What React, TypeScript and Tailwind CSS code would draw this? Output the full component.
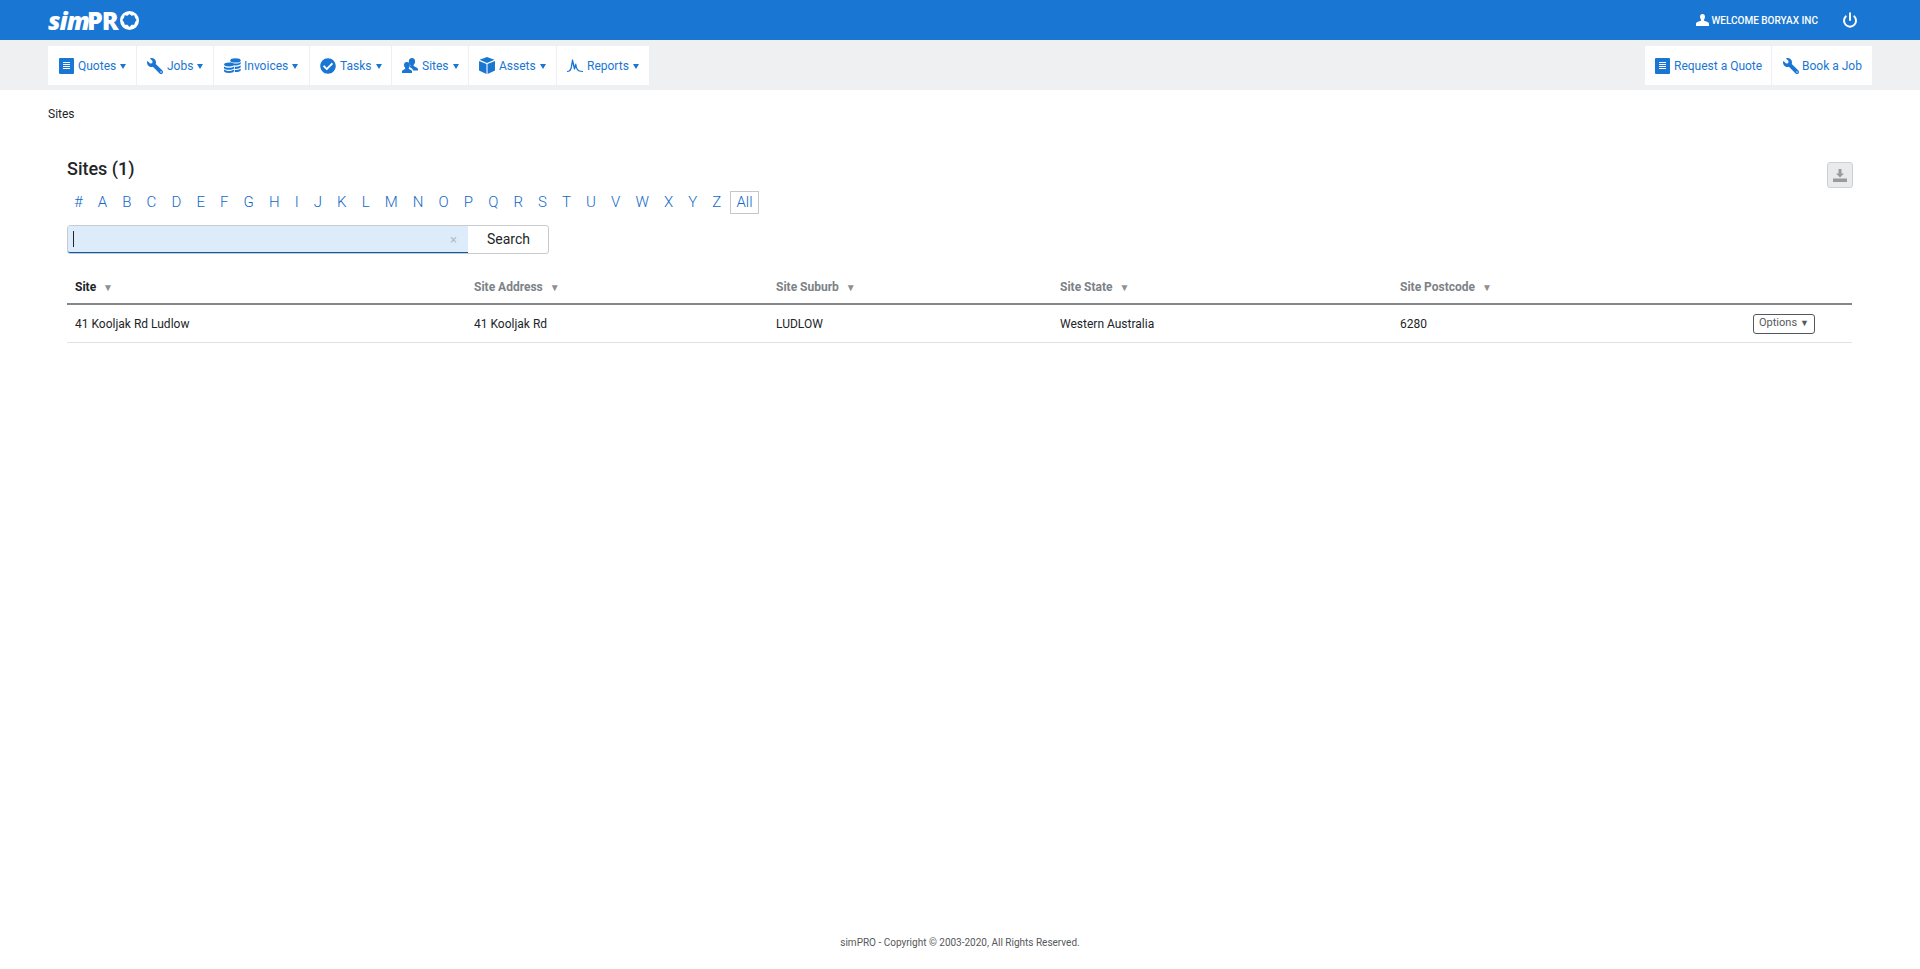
import React from "react";
import { FaWrench, FaCheckCircle } from "react-icons/fa";
import { Power } from "lucide-react";

const blue = "text-[#1976d2]";

function DocIcon() {
    return (
        <svg viewBox="0 0 15 16" className="w-[15px] h-[16px] shrink-0">
            <rect x="0" y="0" width="15" height="16" rx="1" fill="#1976d2" />
            <path d="M4 4.500h7M4 6.500h7M4 8.500h7M4 10.500h7" stroke="#fff" strokeWidth="1" />
        </svg>
    );
}

function CoinsIcon() {
    return (
        <svg viewBox="0 0 17 15" className="w-[17px] h-[15px] shrink-0" fill="#1976d2">
            <ellipse cx="11.500" cy="2.400" rx="5.200" ry="2.200" />
            <path d="M6.300 4v1.600c0 1 2.300 1.900 5.200 1.900s5.200-.9 5.200-1.900V4c-1 1-3 1.500-5.200 1.500S7.300 5 6.300 4z" />
            <path d="M0 6.500c0-1.100 2.200-2 5-2s5 .9 5 2-2.200 2-5 2-5-.9-5-2z" />
            <path d="M0 8.500V10c0 1 2.200 1.800 5 1.800s5-.8 5-1.800V8.500c-1 .9-2.900 1.300-5 1.300s-4-.4-5-1.300z" />
            <path d="M0 11.500V13c0 1 2.200 2 5 2s5-1 5-2v-1.500c-1 .9-2.900 1.500-5 1.500s-4-.6-5-1.500z" />
            <path d="M10.800 8.800c2.500 0 4.800-.4 5.900-1.300v1.600c0 1-2.300 1.900-5.200 1.900h-.7z" />
            <path d="M10.800 12c2.500 0 4.800-.4 5.900-1.300v1.500c0 1-2.300 1.800-5.200 1.800h-.7z" />
        </svg>
    );
}

function UsersIcon() {
    return (
        <svg viewBox="0 0 16 15" className="w-[16px] h-[15px] shrink-0" fill="#1976d2">
            <path d="M10 0C8 0 6.800 1.400 6.800 3.400c0 1.400.5 2.800 1.400 3.700.3.400.3 1.100-.2 1.400l-.8.500c1.700.7 3.500 1.600 4 3.500H16v-1.500c0-1.200-3.300-2.200-4.200-3-.4-.4-.3-1 0-1.300.8-.9 1.300-2.100 1.300-3.200C13.100 1.400 12 0 10 0z" />
            <path d="M4.800 4C3.100 4 2 5.200 2 6.900c0 1.100.4 2.100 1.100 2.900.3.300.3.900-.1 1.200-1 .7-3 1.300-3 2.300V15h10v-1.700c0-1-2-1.600-3-2.300-.4-.3-.4-.9-.1-1.200.7-.8 1-1.800 1-2.900C7.900 5.200 6.500 4 4.800 4z" />
        </svg>
    );
}

function CubeIcon() {
    return (
        <svg viewBox="0 0 15 16" className="w-[16px] h-[17px] shrink-0" fill="#1976d2">
            <path d="M7.500 0L14.500 2.700 7.500 5.600 .5 2.700z" />
            <path d="M0 3.700l7 2.900V16L0 12.600z" />
            <path d="M15 3.700L8 6.600V16l7-3.400z" />
        </svg>
    );
}

function PulseIcon() {
    return (
        <svg viewBox="0 0 16 13" className="w-[16px] h-[13px] shrink-0" fill="#1976d2">
            <path d="M0 12c2.500-.2 3-1.500 3.700-4L5 .5h1l1.600 6.500.9-2.500h.7L10 8.300c.8 2.800 2.700 3.700 6 3.700v1c-3.800 0-6-1-7-4l-.2-.8-.8 2.300H7L5.500 5 4.800 9C4 12 2.600 13 0 13z" />
        </svg>
    );
}

function Caret() {
    return (
        <svg viewBox="0 0 6 5" className="w-[6px] h-[5px] shrink-0 mt-[2px]" fill="#1976d2">
            <path d="M0 0h6L3 5z" />
        </svg>
    );
}

const wrench = <FaWrench className="w-[16px] h-[16px] shrink-0 -scale-x-100" />;

const navItems: { label: string; icon: React.ReactNode; width: string }[] = [
    { label: "Quotes", icon: <DocIcon />, width: "w-[89px]" },
    { label: "Jobs", icon: wrench, width: "w-[77px]" },
    { label: "Invoices", icon: <CoinsIcon />, width: "w-[96px]" },
    { label: "Tasks", icon: <FaCheckCircle className="w-[16px] h-[16px] shrink-0" />, width: "w-[82px]" },
    { label: "Sites", icon: <UsersIcon />, width: "w-[77px]" },
    { label: "Assets", icon: <CubeIcon />, width: "w-[88px]" },
    { label: "Reports", icon: <PulseIcon />, width: "w-[92px]" },
];

const letters = "# A B C D E F G H I J K L M N O P Q R S T U V W X Y Z".split(" ");

const columns = [
    { label: "Site", width: "w-[399px]", dark: true },
    { label: "Site Address", width: "w-[302px]", dark: false },
    { label: "Site Suburb", width: "w-[284px]", dark: false },
    { label: "Site State", width: "w-[340px]", dark: false },
    { label: "Site Postcode", width: "w-[345px]", dark: false },
];

const row = ["41 Kooljak Rd Ludlow", "41 Kooljak Rd", "LUDLOW", "Western Australia", "6280"];

export default function App() {
    return (
        <div className="min-h-[969px] flex flex-col bg-white font-['Roboto',sans-serif] text-[#212529]">
            {/* Top bar */}
            <header className="h-[40px] bg-[#1976d2] pl-[48px] pr-[62px] flex items-center justify-between text-white">
                <div className="flex items-center font-['Open_Sans',sans-serif] font-extrabold text-[25px] leading-none">
                    <span className="italic w-[39px] tracking-[-1px]">sim</span>
                    <span className="w-[33px] tracking-[-1px]">PR</span>
                    <svg viewBox="0 0 20 20" className="w-[19px] h-[19px]" fill="#fff">
                        <path
                            fillRule="evenodd"
                            d="M10 0a10 10 0 1 0 0 20a10 10 0 0 0 0-20zM10 3.200l2.200 1.900 2.800-.7.800 2.800 1.700 2.300-1.700 2.300-.8 2.800-2.800-.2L10 16.800l-2.200-2.400-2.800.2-.8-2.800L2.500 9.500l1.700-2.300L5 4.400l2.800.7z"
                        />
                    </svg>
                </div>
                <div className="flex items-center">
                    <svg viewBox="0 0 13 12" className="w-[13px] h-[12px]" fill="#fff">
                        <path d="M6.500 0C4.800 0 4 1.200 4 2.800c0 1.100.4 2.200 1 2.900.3.400.2.900-.2 1.100C3.500 7.500 0 8 0 9.800V12h13V9.800c0-1.800-3.500-2.300-4.800-3-.4-.2-.5-.7-.2-1.100.6-.7 1-1.800 1-2.900C9 1.200 8.200 0 6.500 0z" />
                    </svg>
                    <span className="ml-[2px] text-[10px] font-medium">WELCOME BORYAX INC</span>
                    <Power className="w-[16px] h-[16px] ml-[24px]" strokeWidth={3} />
                </div>
            </header>

            {/* Nav bar */}
            <nav className="h-[50px] bg-[#eff0f2] pl-[48px] pr-[48px] pt-[6px] flex justify-between">
                <div className="flex h-[39px] bg-white">
                    {navItems.map((item) => (
                        <a
                            key={item.label}
                            className={`${item.width} ${blue} flex items-center pl-[10px] gap-[4px] border-r border-[#eff0f2] last:border-r-0 text-[12px]`}
                        >
                            <span className="w-[16px] flex justify-center shrink-0">{item.icon}</span>
                            <span>{item.label}</span>
                            <Caret />
                        </a>
                    ))}
                </div>
                <div className="flex h-[39px] bg-white">
                    <a className={`w-[127px] ${blue} flex items-center pl-[10px] gap-[4px] border-r border-[#eff0f2] text-[12px]`}>
                        <DocIcon />
                        Request a Quote
                    </a>
                    <a className={`w-[100px] ${blue} flex items-center pl-[11px] gap-[3px] text-[12px]`}>
                        {wrench}
                        Book a Job
                    </a>
                </div>
            </nav>

            <div className="pl-[48px] pt-[17px] text-[12px] leading-[14px] text-[#212529]">Sites</div>

            <main className="flex-1 pl-[67px] pr-[67px] pt-[36px]">
                <div className="flex justify-between">
                    <div>
                        <h1 className="text-[18px] leading-[24px] font-medium">Sites (1)</h1>
                        <div className="flex items-center mt-[10px] pl-[7px] h-[23px] text-[15px] font-light text-[#1169c8]">
                            {letters.map((l) => (
                                <a key={l} className="mr-[15.100px]">
                                    {l}
                                </a>
                            ))}
                            <a className="border border-[#c4c7ca] px-[5px] h-[23px] leading-[21px] -ml-[6px]">All</a>
                        </div>
                        <div className="flex w-[482px] h-[29px] mt-[11px] border border-[#c9cbce] rounded-[3px]">
                            <div className="flex-1 bg-[#dcecfb] border-b border-b-[#0d5aa7] rounded-l-[2px] flex items-center justify-between pl-[5px] pr-[11px]">
                                <span className="w-px h-[16px] bg-[#212529]" />
                                <span className="text-[13px] leading-none text-[#b5bcc4]">×</span>
                            </div>
                            <button className="w-[80px] pl-[1px] text-[14px] text-[#212529]">Search</button>
                        </div>
                    </div>
                    <button className="mt-[5px] w-[26px] h-[26px] bg-[#e9eaec] border border-[#cfd0d2] rounded-[3px] flex items-center justify-center">
                        <svg viewBox="0 0 14 13" className="w-[14px] h-[13px]" fill="#9a9a9a">
                            <path d="M5.500 0h3v4.500H11L7 8.500 3 4.500h2.500z" />
                            <rect x="0" y="9.500" width="14" height="3.500" />
                        </svg>
                    </button>
                </div>

                {/* Table */}
                <div className="mt-[17px] w-[1785px]">
                    <div className="flex h-[34px] pl-[8px] items-center text-[12px] font-bold border-b-2 border-[#84888b]">
                        {columns.map((c) => (
                            <div key={c.label} className={`${c.width} flex items-center ${c.dark ? "text-[#212529]" : "text-[#7c8287]"}`}>
                                {c.label}
                                <span className="ml-[7px] text-[10px] font-normal text-[#8c9094]">▼</span>
                            </div>
                        ))}
                    </div>
                    <div className="flex h-[38px] pl-[8px] items-center text-[12px] border-b border-[#e1e2e3]">
                        {row.map((cell, i) => (
                            <div key={cell} className={columns[i].width}>
                                {cell}
                            </div>
                        ))}
                        <button className="ml-[8px] w-[62px] h-[20px] border border-[#55595c] rounded-[3px] text-[11px] text-[#55595c] flex items-center justify-center gap-[3px]">
                            Options <span className="text-[9px]">▼</span>
                        </button>
                    </div>
                </div>
            </main>

            <footer className="h-[34px] text-center text-[10px] text-[#55595c]">
                simPRO - Copyright © 2003-2020, All Rights Reserved.
            </footer>
        </div>
    );
}
